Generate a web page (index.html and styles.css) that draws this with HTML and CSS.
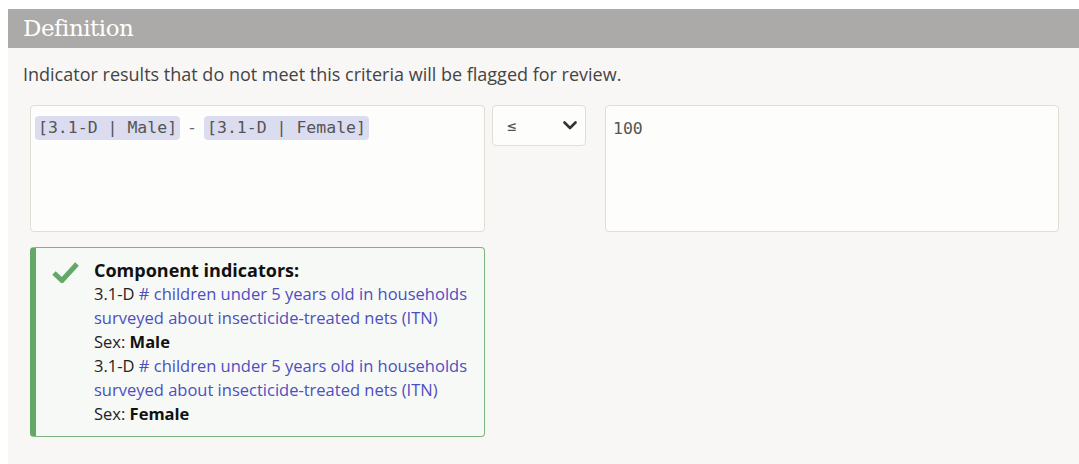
FILE: index.html
```html
<!DOCTYPE html>
<html>
<head>
<meta charset="utf-8">
<link rel="stylesheet" href="styles.css">
</head>
<body>
<section class="panel">
  <h2 class="panel-title">Definition</h2>
  <div class="panel-body">
    <p class="desc">Indicator results that do not meet this criteria will be flagged for review.</p>
    <div class="criteria">
      <div class="formula">
        <span class="token">[3.1-D | Male]</span><span class="op">-</span><span class="token">[3.1-D | Female]</span>
      </div>
      <div class="select">
        <span class="sel-val">≤</span>
        <svg class="chev" width="14" height="9" viewBox="0 0 14 9"><path d="M1.5 1.5 L7 7 L12.5 1.5" fill="none" stroke="#333" stroke-width="2.6" stroke-linecap="round" stroke-linejoin="round"/></svg>
      </div>
      <div class="value">100</div>
    </div>
    <div class="components">
      <svg class="check" width="27" height="22" viewBox="0 0 27 22"><path d="M2 12 L10 19.5 L25 3" fill="none" stroke="#64a868" stroke-width="5"/></svg>
      <div class="comp-text">
        <div class="comp-title">Component indicators:</div>
        <div class="line">3.1-D <a class="link" href="#"># children under 5 years old in households surveyed about insecticide-treated nets (ITN)</a></div>
        <div class="line">Sex: <b>Male</b></div>
        <div class="line">3.1-D <a class="link" href="#"># children under 5 years old in households surveyed about insecticide-treated nets (ITN)</a></div>
        <div class="line">Sex: <b>Female</b></div>
      </div>
    </div>
  </div>
</section>
</body>
</html>
```
FILE: styles.css
```css
html, body { margin: 0; padding: 0; background: #ffffff; }
body { padding: 9px 0 0 8px; }
.panel { width: 1080px; background: #f8f7f5; min-height: 455px; }
.panel-title {
  margin: 0;
  height: 39px;
  background: #abaaa8;
  color: #ffffff;
  font-family: "DejaVu Serif", serif;
  font-weight: normal;
  font-size: 23px;
  letter-spacing: -0.5px;
  line-height: 39px;
  padding-left: 15px;
}
.panel-body { padding: 14px 0 0 15px; }
.desc {
  margin: 0;
  font-family: "Open Sans", sans-serif;
  font-size: 18px;
  line-height: 24px;
  color: #444444;
}
.criteria { display: flex; align-items: flex-start; margin-top: 19px; margin-left: 7px; }
.formula, .value, .select {
  background: #fdfdfc;
  border: 1px solid #e2ddd5;
  border-radius: 4px;
  box-sizing: border-box;
  font-family: "DejaVu Sans Mono", monospace;
  font-size: 16.5px;
  color: #555;
}
.formula { width: 455px; height: 127px; padding: 10px 4px; line-height: 24px; }
.token { display: inline-block; background: #dcdcf0; border-radius: 4px; padding: 0 3px; line-height: 24px; }
.op { display: inline-block; color: #666; margin: 0 7px; }
.select {
  width: 94px; height: 41px; margin-left: 7px;
  display: flex; align-items: center; justify-content: space-between;
  padding: 0 8px 0 14px;
}
.sel-val { font-size: 15px; }
.value { width: 454px; height: 127px; margin-left: 19px; padding: 13px 7px; line-height: 20px; }
.components {
  display: flex;
  width: 455px;
  box-sizing: border-box;
  margin: 15px 0 0 7px;
  border: 1px solid #7eb480;
  border-left: 6px solid #64a868;
  border-radius: 4px;
  background: #f7f9f7;
  padding: 10px 6px 10px 16px;
  font-family: "Open Sans", sans-serif;
  font-size: 16.5px;
  line-height: 24px;
  color: #222;
}
.check { flex: none; margin-top: 3px; margin-right: 15px; }
.comp-text { flex: 1; }
.comp-title { font-weight: bold; color: #111; font-size: 18px; }
.link { color: #4e4ec0; text-decoration: none; }
b { color: #111; }
```
